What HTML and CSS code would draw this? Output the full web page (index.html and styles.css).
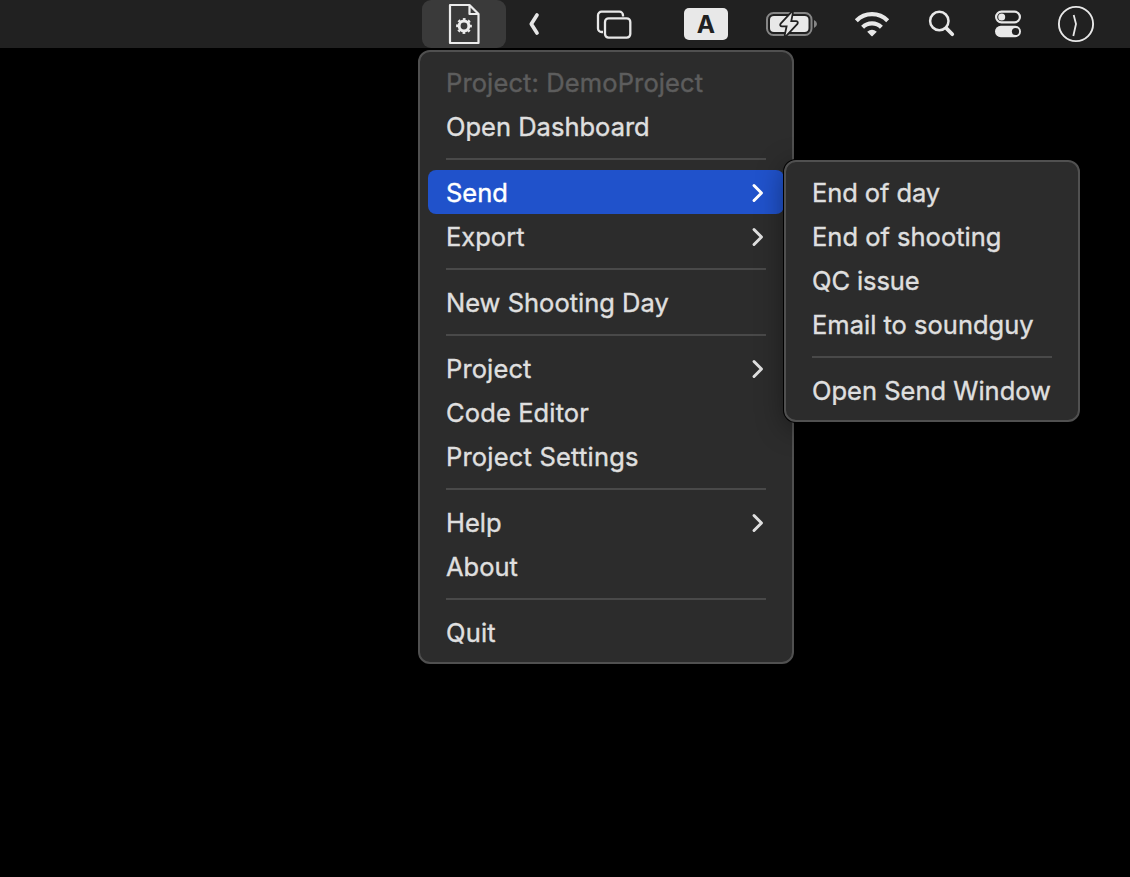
FILE: index.html
```html
<!DOCTYPE html>
<html lang="en">
<head>
<meta charset="utf-8">
<title>Menu bar</title>
<link rel="stylesheet" href="styles.css">
</head>
<body>
<header class="menubar">
  <div class="status active">
    <svg width="84" height="48" viewBox="0 0 84 48" fill="none" stroke="#ececec" stroke-width="2.200">
      <path d="M28 5H47.500L56.500 14V43H28ZM47.500 5V14H56.500" stroke-linejoin="round"/>
      <circle cx="42" cy="26" r="4.900" stroke-width="3"/>
      <circle cx="42" cy="26" r="6.900" stroke-width="2" stroke-dasharray="2.710 2.710" stroke-dashoffset="1.355"/>
    </svg>
  </div>
  <svg class="status back" width="12" height="24" viewBox="0 0 12 24"><path d="M9 3L3.300 12L9 21" fill="none" stroke="#e6e6e6" stroke-width="3.700" stroke-linecap="round" stroke-linejoin="round"/></svg>
  <svg class="status windows" width="36" height="30" viewBox="0 0 36 30" fill="none" stroke="#e8e8e8" stroke-width="2.300"><path d="M7 23H5.600A3.600 3.600 0 0 1 2 19.400V6.300A3.600 3.600 0 0 1 5.600 2.700H23.400A3.600 3.600 0 0 1 27 6.300V7.500"/><rect x="9" y="9.300" width="25.300" height="19.400" rx="3.600"/></svg>
  <div class="status input">A</div>
  <svg class="status battery" width="52" height="28" viewBox="0 0 52 28">
    <rect x="1" y="3" width="44.500" height="22" rx="6.500" fill="none" stroke="#868686" stroke-width="2"/>
    <path d="M48 10Q51 11.500 51 14Q51 16.500 48 18Z" fill="#868686"/>
    <rect x="4" y="6" width="38.500" height="16" rx="4" fill="#e8e8e8"/>
    <path d="M26 2.700L15.300 14.200Q14.600 15.400 16 15.400H21.700L19.600 25.300L30.800 13.200Q31.200 12 30 12H24.200Z" fill="#e8e8e8" stroke="#212121" stroke-width="3.600" paint-order="stroke" stroke-linejoin="round"/>
  </svg>
  <svg class="status wifi" width="36" height="28" viewBox="0 0 36 28" fill="none" stroke="#e8e8e8" stroke-width="4.200"><path d="M2.300 10.800A22 22 0 0 1 33.700 10.800"/><path d="M8.600 17.200A13.300 13.300 0 0 1 27.400 17.200"/><path d="M13.200 21.800Q18 17.800 22.800 21.800L18.600 26Q18 26.500 17.400 26Z" fill="#e8e8e8" stroke="none"/></svg>
  <svg class="status search" width="28" height="28" viewBox="0 0 28 28" fill="none" stroke="#e8e8e8" stroke-linecap="round"><circle cx="11.300" cy="11" r="9.200" stroke-width="2.500"/><path d="M18.500 18.400L24.300 24.200" stroke-width="3.700"/></svg>
  <svg class="status control" width="28" height="28" viewBox="0 0 28 28"><rect x="2.100" y="1.600" width="23.800" height="10.800" rx="5.400" fill="none" stroke="#e8e8e8" stroke-width="2.200"/><circle cx="7.700" cy="7" r="3.500" fill="#e8e8e8"/><rect x="1" y="15.700" width="26" height="11.600" rx="5.800" fill="#e8e8e8"/><circle cx="21.500" cy="21.500" r="3.600" fill="#212121"/></svg>
  <svg class="status clock" width="38" height="38" viewBox="0 0 38 38" fill="none" stroke="#e8e8e8"><circle cx="19" cy="19" r="17.100" stroke-width="1.900"/><path d="M16.700 10L19 19L16.300 31" stroke-width="1.800" stroke-linejoin="round"/></svg>
</header>

<nav class="menu main-menu">
  <div class="item disabled wide">Project: DemoProject</div>
  <div class="item">Open Dashboard</div>
  <hr class="separator">
  <div class="item selected">Send<svg class="chevron" viewBox="0 0 14 22"><path d="M3 3.500L10.500 11L3 18.500"/></svg></div>
  <div class="item">Export<svg class="chevron" viewBox="0 0 14 22"><path d="M3 3.500L10.500 11L3 18.500"/></svg></div>
  <hr class="separator">
  <div class="item">New Shooting Day</div>
  <hr class="separator">
  <div class="item wide">Project<svg class="chevron" viewBox="0 0 14 22"><path d="M3 3.500L10.500 11L3 18.500"/></svg></div>
  <div class="item wide">Code Editor</div>
  <div class="item wider">Project Settings</div>
  <hr class="separator">
  <div class="item">Help<svg class="chevron" viewBox="0 0 14 22"><path d="M3 3.500L10.500 11L3 18.500"/></svg></div>
  <div class="item">About</div>
  <hr class="separator">
  <div class="item wider">Quit</div>
</nav>

<nav class="menu submenu">
  <div class="item narrow">End of day</div>
  <div class="item">End of shooting</div>
  <div class="item narrow">QC issue</div>
  <div class="item">Email to soundguy</div>
  <hr class="separator">
  <div class="item">Open Send Window</div>
</nav>
</body>
</html>
```
FILE: styles.css
```css
* { box-sizing: border-box; }
body {
  margin: 0;
  height: 877px;
  overflow: hidden;
  background: #000;
  color: #dfdfdf;
  font-family: Inter, "Liberation Sans", sans-serif;
}
.menubar {
  display: flex;
  align-items: center;
  height: 48px;
  padding-left: 422px;
  background: #212121;
}
.status { flex: none; display: block; }
.active {
  height: 48px;
  border-radius: 9px;
  background: #3a3a3a;
}
.active svg { display: block; }
.back { margin-left: 22px; }
.windows { margin-left: 56px; }
.input {
  width: 44px;
  height: 32px;
  margin-left: 52px;
  border-radius: 5px;
  background: #e8e8e8;
  color: #212121;
  font-size: 24.500px;
  font-weight: 700;
  line-height: 33px;
  text-align: center;
}
.battery { margin-left: 38px; }
.wifi { margin-left: 36px; }
.search { margin: 0 1px 0 38px; }
.control { margin-left: 37px; }
.clock { margin-left: 35px; }

.menu {
  position: absolute;
  padding: 8px;
  border: 2px solid #505050;
  border-radius: 12px;
  background: #2c2c2c;
}
.main-menu { left: 418px; top: 50px; width: 376px; }
.submenu {
  left: 784px;
  top: 160px;
  width: 296px;
  box-shadow: 0 0 0 1px #000, 0 6px 28px rgba(0, 0, 0, .4);
}
.item {
  display: flex;
  align-items: center;
  justify-content: space-between;
  height: 44px;
  padding: 2px 19px 0 18px;
  border-radius: 8px;
  font-size: 25.500px;
  line-height: 42px;
  white-space: nowrap;
  -webkit-text-stroke: .4px currentColor;
}
.wide { letter-spacing: .12px; }
.wider { letter-spacing: .2px; }
.narrow { letter-spacing: -.1px; }
.disabled { color: #5d5d5d; }
.selected { background: #2052cb; color: #fff; }
.separator {
  height: 2px;
  margin: 10px 18px;
  border: 0;
  background: #494949;
}
.chevron {
  width: 14px;
  height: 22px;
  fill: none;
  stroke: currentColor;
  stroke-width: 3;
  stroke-linecap: round;
  stroke-linejoin: round;
}
```
